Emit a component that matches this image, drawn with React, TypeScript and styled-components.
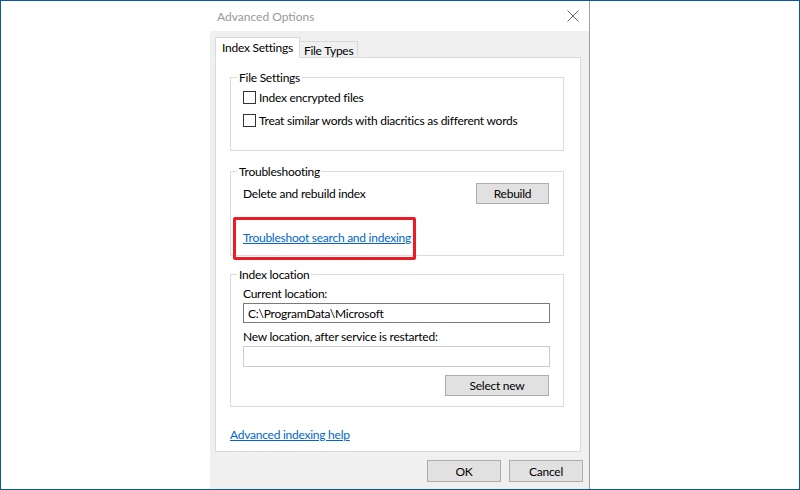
import styled, { createGlobalStyle } from "styled-components";

const GlobalStyle = createGlobalStyle`
  html, body {
    margin: 0;
    padding: 0;
    background: #fff;
  }
  * {
    box-sizing: border-box;
  }
`;

const Screen = styled.div`
  width: 800px;
  height: 490px;
  border: 1px solid #0b5a98;
  background: #fff;
  display: flex;
  padding-left: 209px;
  font-family: "Segoe UI", Lato, sans-serif;
  font-size: 12px;
  line-height: 15px;
  letter-spacing: -0.25px;
  color: #000;
`;

const Dialog = styled.div`
  width: 380px;
  height: 100%;
  border-right: 1px solid #a0a0a0;
  display: flex;
  flex-direction: column;
`;

const TitleBar = styled.div`
  height: 30px;
  flex: none;
  background: #fff;
  display: flex;
  align-items: center;
  justify-content: space-between;
  padding: 0 10px 0 7px;
`;

const Title = styled.span`
  color: #999;
  font-size: 12px;
  letter-spacing: 0;
`;

const CloseIcon = () => (
  <svg width="12" height="12" viewBox="0 0 12 12">
    <path d="M0.5 0.5 L11.5 11.5 M11.5 0.5 L0.5 11.5" stroke="#666" strokeWidth="1" fill="none" />
  </svg>
);

const Body = styled.div`
  flex: 1;
  background: #f0f0f0;
  padding: 7px 8px 0 5px;
  display: flex;
  flex-direction: column;
`;

const TabStrip = styled.div`
  display: flex;
  align-items: flex-end;
  height: 20px;
  margin-bottom: -1px;
  position: relative;
  z-index: 1;
`;

const Tab = styled.div<{ active?: boolean }>`
  height: ${(p) => (p.active ? "21px" : "17px")};
  background: ${(p) => (p.active ? "#fff" : "#f0f0f0")};
  border: 1px solid #d9d9d9;
  border-bottom: ${(p) => (p.active ? "1px solid #fff" : "1px solid #d9d9d9")};
  border-left: ${(p) => (p.active ? "1px solid #d9d9d9" : "none")};
  padding: ${(p) => (p.active ? "2px 6px 0 6px" : "1px 4px 0 4px")};
  white-space: nowrap;
`;

const Panel = styled.div`
  height: 395px;
  background: #fff;
  border: 1px solid #d9d9d9;
  padding: 12px 16px 0 14px;
  display: flex;
  flex-direction: column;
`;

const Group = styled.fieldset<{ h: number; gap?: number }>`
  position: relative;
  margin: ${(p) => p.gap ?? 0}px 0 0 0;
  height: ${(p) => p.h}px;
  border: 1px solid #dcdcdc;
  padding: 0 14px 0 12px;
  min-inline-size: 0;
`;

const Legend = styled.legend`
  padding: 0 2px;
  margin-left: -6px;
  line-height: 15px;
`;

const CheckRow = styled.label<{ top: number }>`
  display: flex;
  align-items: center;
  gap: 3px;
  margin-top: ${(p) => p.top}px;
  height: 15px;
  white-space: nowrap;
`;

const CheckBox = styled.span`
  width: 13px;
  height: 13px;
  border: 1px solid #333;
  background: #fff;
  flex: none;
`;

const ActionRow = styled.div`
  display: flex;
  align-items: center;
  justify-content: space-between;
  margin-top: 4px;
`;

const Button = styled.button<{ w: number; h?: number }>`
  width: ${(p) => p.w}px;
  height: ${(p) => p.h ?? 21}px;
  background: #e1e1e1;
  border: 1px solid #adadad;
  font: inherit;
  letter-spacing: inherit;
  color: #000;
  padding: 0;
`;

const LinkText = styled.a`
  color: #0066cc;
  text-decoration: underline;
  cursor: pointer;
`;

const Highlight = styled.div`
  position: absolute;
  left: 2px;
  top: 38px;
  width: 183px;
  height: 43px;
  border: 3px solid #ec1c24;
  border-radius: 2px;
  pointer-events: none;
`;

const TroubleLink = styled.div`
  margin-top: 26px;
`;

const FieldLabel = styled.div<{ top: number }>`
  margin-top: ${(p) => p.top}px;
`;

const TextBox = styled.div<{ disabled?: boolean; top: number; h: number }>`
  height: ${(p) => p.h}px;
  margin-top: ${(p) => p.top}px;
  border: 1px solid ${(p) => (p.disabled ? "#cccccc" : "#7a7a7a")};
  background: #fff;
  padding: 2px 4px;
  width: 307px;
`;

const ButtonRow = styled.div`
  display: flex;
  justify-content: flex-end;
  margin-top: 8px;
`;

const HelpLink = styled.div`
  margin-top: 20px;
`;

const Footer = styled.div`
  display: flex;
  justify-content: flex-end;
  gap: 8px;
  margin-top: 8px;
  margin-right: -2px;
`;

export default function App() {
  return (
    <>
      <GlobalStyle />
      <Screen>
        <Dialog>
          <TitleBar>
            <Title>Advanced Options</Title>
            <CloseIcon />
          </TitleBar>
          <Body>
            <TabStrip>
              <Tab active>Index Settings</Tab>
              <Tab>File Types</Tab>
            </TabStrip>
            <Panel>
              <Group h={81}>
                <Legend>File Settings</Legend>
                <CheckRow top={5}>
                  <CheckBox />
                  Index encrypted files
                </CheckRow>
                <CheckRow top={8}>
                  <CheckBox />
                  Treat similar words with diacritics as different words
                </CheckRow>
              </Group>
              <Group h={92} gap={13}>
                <Legend>Troubleshooting</Legend>
                <ActionRow>
                  <span>Delete and rebuild index</span>
                  <Button w={73}>Rebuild</Button>
                </ActionRow>
                <TroubleLink>
                  <LinkText>Troubleshoot search and indexing</LinkText>
                </TroubleLink>
                <Highlight />
              </Group>
              <Group h={140} gap={11}>
                <Legend>Index location</Legend>
                <FieldLabel top={4}>Current location:</FieldLabel>
                <TextBox top={2} h={20}>C:\ProgramData\Microsoft</TextBox>
                <FieldLabel top={6}>New location, after service is restarted:</FieldLabel>
                <TextBox disabled top={2} h={21} />
                <ButtonRow>
                  <Button w={104}>Select new</Button>
                </ButtonRow>
              </Group>
              <HelpLink>
                <LinkText>Advanced indexing help</LinkText>
              </HelpLink>
            </Panel>
            <Footer>
              <Button w={74} h={22}>OK</Button>
              <Button w={74} h={22}>Cancel</Button>
            </Footer>
          </Body>
        </Dialog>
      </Screen>
    </>
  );
}
